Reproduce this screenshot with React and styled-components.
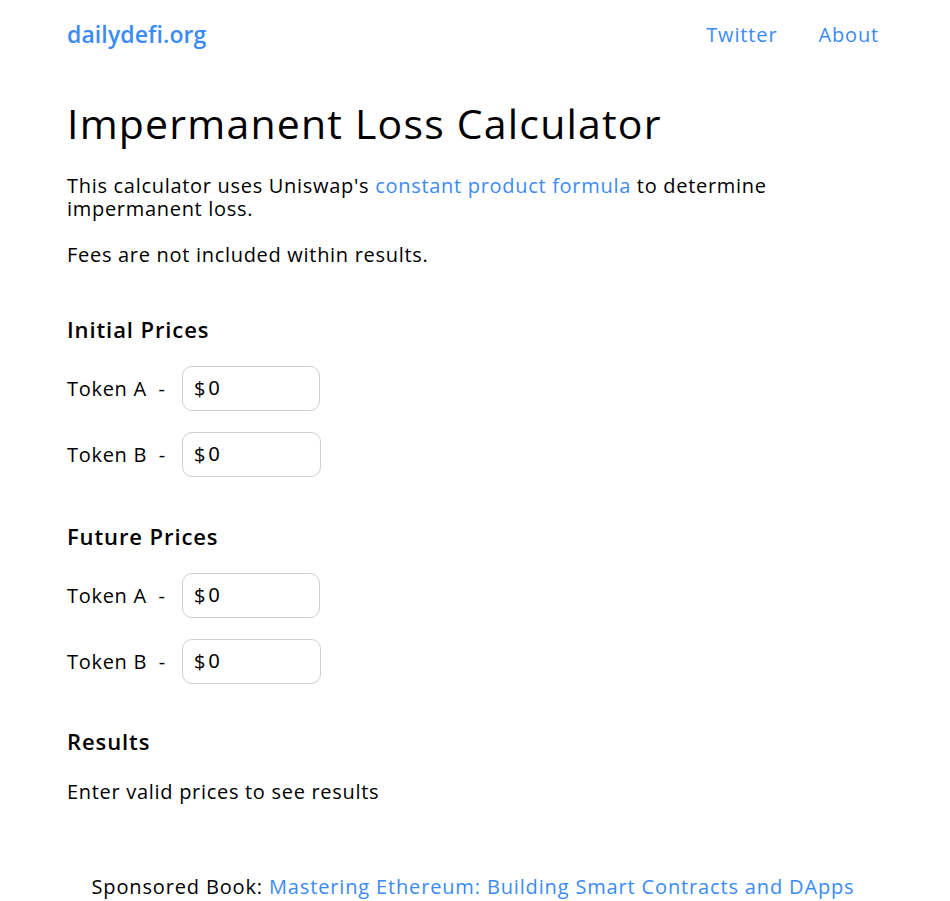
import React, { useState } from 'react';
import styled, { createGlobalStyle } from 'styled-components';

const FONT = `"Open Sans", "Liberation Sans", sans-serif`;
const BLUE = '#3a8bf5';

const GlobalStyle = createGlobalStyle`
  html, body {
    margin: 0;
    padding: 0;
    background: #ffffff;
  }
  body {
    font-family: ${FONT};
    color: #000000;
    letter-spacing: 0.7px;
  }
  * {
    box-sizing: border-box;
  }
`;

const Page = styled.div`
  width: 950px;
  min-height: 901px;
  padding: 0 71px 0 67px;
  display: flex;
  flex-direction: column;
`;

const Header = styled.header`
  height: 68px;
  display: flex;
  align-items: center;
  justify-content: space-between;
`;

const Logo = styled.a`
  color: ${BLUE};
  font-size: 23px;
  font-weight: 600;
  letter-spacing: 0.1px;
  text-decoration: none;
`;

const Nav = styled.nav`
  display: flex;
  gap: 41px;
`;

const NavLink = styled.a`
  color: ${BLUE};
  font-size: 20px;
  letter-spacing: 0.85px;
  text-decoration: none;
`;

const Title = styled.h1`
  margin: 30px 0 0;
  font-size: 41px;
  font-weight: 400;
  letter-spacing: 1.2px;
  line-height: 50px;
`;

const Text = styled.p`
  margin: ${p => p.$top || 0}px 0 0;
  font-size: 20px;
  line-height: 23px;
`;

const Link = styled.a`
  color: ${BLUE};
  text-decoration: none;
`;

const SectionTitle = styled.h2`
  margin: ${p => p.$top}px 0 0;
  font-size: 22px;
  font-weight: 600;
  letter-spacing: 0.9px;
  line-height: 28px;
`;

const Rows = styled.div`
  display: flex;
  flex-direction: column;
  gap: 21px;
  margin-top: 23px;
`;

const Row = styled.div`
  display: flex;
  align-items: center;
`;

const Label = styled.label`
  width: 115px;
  font-size: 20px;
  white-space: pre;
`;

const PriceBox = styled.div`
  width: ${p => p.$width}px;
  height: 45px;
  border: 1px solid #cfcfcf;
  border-radius: 10px;
  display: flex;
  align-items: center;
  padding-left: 11px;
`;

const Dollar = styled.span`
  font-size: 20px;
  letter-spacing: 0;
`;

const PriceInput = styled.input`
  width: 100%;
  border: none;
  outline: none;
  padding: 0 0 0 3px;
  font-family: "Liberation Sans", Arial, sans-serif;
  font-size: 20px;
  letter-spacing: 0;
  background: transparent;
  color: #000;
`;

const Footer = styled.footer`
  margin-top: 70px;
  text-align: center;
  font-size: 20px;
  letter-spacing: 0.85px;
`;

const PriceRow = ({ label, width }) => {
  const [value, setValue] = useState('0');
  return (
    <Row>
      <Label>{label}</Label>
      <PriceBox $width={width}>
        <Dollar>$</Dollar>
        <PriceInput value={value} onChange={e => setValue(e.target.value)} />
      </PriceBox>
    </Row>
  );
};

const App = () => (
  <Page>
    <GlobalStyle />
    <Header>
      <Logo href="#">dailydefi.org</Logo>
      <Nav>
        <NavLink href="#">Twitter</NavLink>
        <NavLink href="#">About</NavLink>
      </Nav>
    </Header>

    <Title>Impermanent Loss Calculator</Title>
    <Text $top={26}>
      This calculator uses Uniswap's <Link href="#">constant product formula</Link> to determine
      <br />
      impermanent loss.
    </Text>
    <Text $top={23}>Fees are not included within results.</Text>

    <SectionTitle $top={49}>Initial Prices</SectionTitle>
    <Rows>
      <PriceRow label="Token A  -" width={138} />
      <PriceRow label="Token B  -" width={139} />
    </Rows>

    <SectionTitle $top={45}>Future Prices</SectionTitle>
    <Rows>
      <PriceRow label="Token A  -" width={138} />
      <PriceRow label="Token B  -" width={139} />
    </Rows>

    <SectionTitle $top={43}>Results</SectionTitle>
    <Text $top={25}>Enter valid prices to see results</Text>

    <Footer>
      Sponsored Book: <Link href="#">Mastering Ethereum: Building Smart Contracts and DApps</Link>
    </Footer>
  </Page>
);

export default App;
